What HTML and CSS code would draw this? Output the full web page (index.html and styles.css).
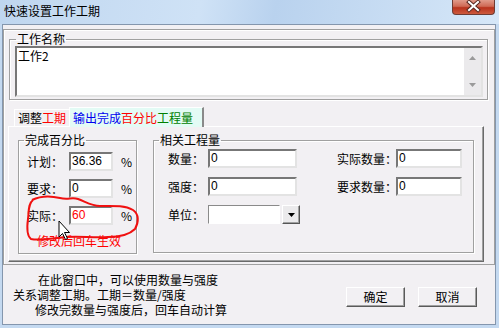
FILE: index.html
```html
<!DOCTYPE html>
<html lang="zh-CN">
<head>
    <meta charset="UTF-8">
    <title>快速设置工作工期</title>
    <link rel="stylesheet" href="styles.css">
</head>
<body>
    <div class="titlebar">
        <span class="title">快速设置工作工期</span>
        <div class="close">
            <svg width="43" height="15" viewBox="0 0 43 15">
                <path d="M17 3 L26 11 M26 3 L17 11" stroke="#5a2a22" stroke-width="4" stroke-linecap="square"/>
                <path d="M17 3 L26 11 M26 3 L17 11" stroke="#fff" stroke-width="2" stroke-linecap="square"/>
            </svg>
        </div>
    </div>

    <div class="client">
        <div class="frame">
            <fieldset class="group name-group">
                <legend>工作名称</legend>
                <div class="memo">
                    <div class="memo-text">工作2</div>
                    <div class="vscroll">
                        <svg width="7" height="4"><path d="M0 4 L3.5 0 L7 4 Z" fill="#9a9a9a"/></svg>
                        <svg width="7" height="4"><path d="M0 0 L3.5 4 L7 0 Z" fill="#9a9a9a"/></svg>
                    </div>
                </div>
            </fieldset>

            <div class="tabs">
                <div class="tab">调整<span class="red">工期</span></div>
                <div class="tab active"><span class="blue">输出完成</span><span class="red">百分比</span><span class="green">工程量</span></div>
            </div>

            <div class="tabpage">
                <fieldset class="group pct">
                    <legend>完成百分比</legend>
                    <div class="pct-rows">
                        <div class="row"><span class="lbl">计划：</span><div class="edit small">36.36</div><span class="unit">%</span></div>
                        <div class="row"><span class="lbl">要求：</span><div class="edit small">0</div><span class="unit">%</span></div>
                        <div class="row"><span class="lbl">实际：</span><div class="edit small red">60</div><span class="unit">%</span></div>
                    </div>
                    <div class="note">修改后回车生效</div>
                </fieldset>

                <fieldset class="group qty">
                    <legend>相关工程量</legend>
                    <div class="qty-grid">
                        <span class="lbl">数量：</span><div class="edit wide">0</div>
                        <span class="lbl right">实际数量：</span><div class="edit mid">0</div>
                        <span class="lbl">强度：</span><div class="edit wide">0</div>
                        <span class="lbl right">要求数量：</span><div class="edit mid">0</div>
                        <span class="lbl">单位：</span>
                        <div class="combo">
                            <div class="combo-field"></div>
                            <div class="combo-btn">
                                <svg width="7" height="4"><path d="M0 0 L7 0 L3.5 4 Z" fill="#000"/></svg>
                            </div>
                        </div>
                    </div>
                </fieldset>
            </div>
        </div>

        <div class="footer">
            <div class="hint">
                <div class="line l1">在此窗口中，可以使用数量与强度</div>
                <div class="line l2">关系调整工期。工期＝数量/强度</div>
                <div class="line l3">修改完数量与强度后，回车自动计算</div>
            </div>
            <div class="buttons">
                <div class="btn">确定</div>
                <div class="btn">取消</div>
            </div>
        </div>
    </div>

    <!-- red pen scribble and mouse pointer from the screenshot -->
    <svg class="overlay" width="499" height="328" viewBox="0 0 499 328">
        <path d="M32 200 C42 195 52 196 60 198 C68 200 72 197 78 199 C86 202 92 206 100 206 C112 206 124 205 133 210 C139 214 139 222 135 229 C128 236 118 237 108 237 C94 238 80 236 67 237 C54 238 40 241 31 239 C26 235 27 226 28 219 C29 211 28 204 33 200"
              fill="none" stroke="#f01010" stroke-width="2"/>
        <path d="M59 221 L59 237 L62.5 233.5 L65.5 239.5 L67.5 238.5 L64.5 232.5 L69.5 232.5 Z" fill="#fff" stroke="#000" stroke-width="1" stroke-linejoin="round"/>
    </svg>
</body>
</html>
```

FILE: styles.css
```css
body {
    margin: 0;
    width: 499px;
    height: 328px;
    overflow: hidden;
    position: relative;
    background: #c4d9f0;
    font-family: "Noto Sans CJK SC", "Liberation Sans", sans-serif;
    font-size: 12px;
    line-height: 14px;
    color: #000;
}
.titlebar {
    height: 24px;
    display: flex;
    justify-content: space-between;
    align-items: flex-start;
    padding-left: 4px;
    background: linear-gradient(100deg, #bfd6ef 0%, #cfe2f6 40%, #b9d2ee 55%, #d6e7f8 100%);
}
.title {
    margin-top: 4px;
    font-size: 12px;
}
.close {
    width: 43px;
    height: 15px;
    margin-right: 4px;
    box-sizing: border-box;
    border: 1px solid #6e3b33;
    border-top: none;
    border-radius: 0 0 4px 4px;
    background: linear-gradient(#e09a8a 0%, #cf6a55 45%, #b8321c 55%, #cc5a3e 100%);
    overflow: hidden;
}
.close svg {
    display: block;
    margin: -1px 0 0 -1px;
}
.client {
    margin: 0 3px 0 2px;
    height: 301px;
    box-sizing: border-box;
    border: 1px solid #8496ad;
    background: #f2f0f3;
}
.frame {
    margin-top: 4px;
    height: 236px;
    box-sizing: border-box;
    border: 1px solid #a0a0a0;
    box-shadow: inset 1px 1px #fff;
}
.group {
    margin: 0;
    padding: 0;
    border: 1px solid #a0a0a0;
    box-shadow: inset 1px 1px #fff, 1px 1px #fff;
    box-sizing: border-box;
    min-width: 0;
}
.group legend {
    padding: 0 1px;
    margin-left: 5px;
    line-height: 14px;
}
.name-group {
    margin: 2px 6px 0 5px;
    padding: 0 4px 2px 5px;
}
.name-group legend {
    margin-left: 1px;
}
.memo {
    display: flex;
    height: 51px;
    box-sizing: border-box;
    border: 2px solid;
    border-color: #777 #e3e3e3 #e3e3e3 #777;
    background: #fff;
}
.memo-text {
    flex: 1;
    padding: 1px 1px;
}
.vscroll {
    width: 17px;
    background: #ebeaec;
    display: flex;
    flex-direction: column;
    justify-content: space-between;
    align-items: center;
    padding: 8px 0 8px;
}
.vscroll svg {
    display: block;
}
.tabs {
    display: flex;
    align-items: flex-end;
    margin: 7px 0 0 10px;
    height: 19px;
}
.tab {
    height: 17px;
    box-sizing: border-box;
    padding: 1px 3px 0 3px;
    border-top: 1px solid #fff;
    border-left: 1px solid #fff;
    line-height: 14px;
}
.tab.active {
    height: 20px;
    margin-bottom: -1px;
    padding: 3px 9px 0 3px;
    background: #e3fbf5;
    border-right: 2px solid #8a8a8a;
    position: relative;
}
.red { color: #f00; }
.blue { color: #0000f0; }
.green { color: #008000; }
.tabpage {
    margin-left: 4px;
    width: 476px;
    height: 136px;
    box-sizing: border-box;
    border: 1px solid;
    border-color: #fff #6a6a6a #6a6a6a #fff;
    box-shadow: inset -1px -1px #a0a0a0;
    display: flex;
    align-items: flex-start;
    padding: 6px 0 0 9px;
}
.pct {
    width: 119px;
    height: 121px;
}
.pct-rows {
    padding: 5px 0 0 8px;
    display: flex;
    flex-direction: column;
    gap: 8px;
}
.row {
    display: flex;
    align-items: center;
    height: 19px;
}
.lbl {
    white-space: nowrap;
}
.pct .lbl {
    width: 42px;
}
.unit {
    margin-left: 8px;
}
.edit {
    height: 19px;
    box-sizing: border-box;
    border: 2px solid;
    border-color: #777 #e3e3e3 #e3e3e3 #777;
    background: #fff;
    padding: 0 1px;
    line-height: 15px;
    font-family: "Liberation Sans", Arial, sans-serif;
    font-size: 12px;
}
.edit.small { width: 44px; }
.edit.wide { width: 89px; }
.edit.mid { width: 66px; }
.edit.red { color: #f00; }
.note {
    color: #f00;
    margin: 9px 0 0 18px;
}
.qty {
    margin-left: 16px;
    width: 321px;
    height: 120px;
}
.qty-grid {
    display: grid;
    grid-template-columns: 40px 89px 40px 59px 66px;
    grid-auto-rows: 19px;
    row-gap: 9px;
    align-items: center;
    padding: 2px 0 0 14px;
}
.qty-grid .lbl.right { grid-column: 4; }
.qty-grid .edit.mid { grid-column: 5; }
.combo {
    display: flex;
    align-items: center;
    gap: 2px;
    width: 92px;
    height: 19px;
}
.combo-field {
    width: 72px;
    height: 19px;
    box-sizing: border-box;
    border: 1px solid;
    border-color: #8a8a8a #fff #fff #8a8a8a;
    background: #fff;
}
.combo-btn {
    width: 18px;
    height: 19px;
    box-sizing: border-box;
    border: 1px solid;
    border-color: #fff #555 #555 #fff;
    box-shadow: inset -1px -1px #a0a0a0;
    background: #ebeaec;
    display: flex;
    align-items: center;
    justify-content: center;
}
.combo-btn svg { display: block; }
.footer {
    display: flex;
    justify-content: space-between;
    align-items: flex-start;
}
.hint {
    padding-top: 7px;
    line-height: 15px;
}
.line { white-space: nowrap; }
.l1 { padding-left: 35px; }
.l2 { padding-left: 10px; }
.l3 { padding-left: 32px; }
.buttons {
    display: flex;
    gap: 13px;
    margin: 22px 18px 0 0;
}
.btn {
    width: 59px;
    height: 20px;
    box-sizing: border-box;
    border: 1px solid;
    border-color: #fff #5a5a5a #5a5a5a #fff;
    box-shadow: inset -1px -1px #a0a0a0;
    display: flex;
    align-items: center;
    justify-content: center;
    background: #f2f0f3;
}
.overlay {
    position: absolute;
    left: 0;
    top: 0;
    pointer-events: none;
}
```
